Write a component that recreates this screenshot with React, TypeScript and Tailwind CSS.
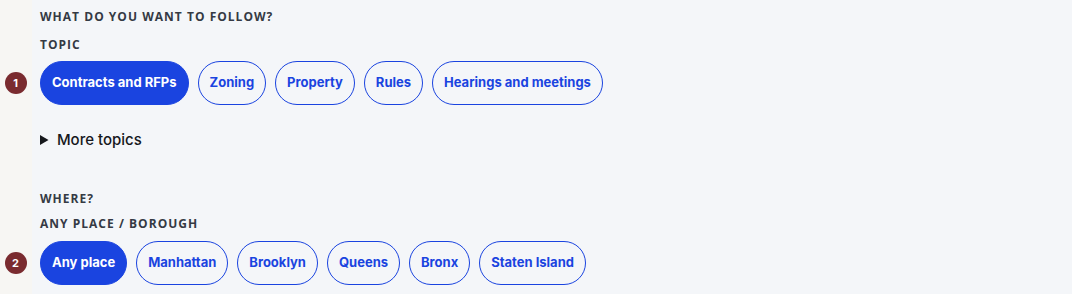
import { useState } from "react";

const topics = ["Contracts and RFPs", "Zoning", "Property", "Rules", "Hearings and meetings"];
const places = ["Any place", "Manhattan", "Brooklyn", "Queens", "Bronx", "Staten Island"];

function Label({ children, className = "" }: { children: React.ReactNode; className?: string }) {
  return (
    <div
      className={`pl-[40px] text-[12px] leading-[16px] font-bold tracking-[0.085em] text-[#353a44] ${className}`}
      style={{ fontFamily: '"Open Sans", sans-serif' }}
    >
      {children}
    </div>
  );
}

function ChipRow({
  step,
  items,
  selected,
  onSelect,
}: {
  step: number;
  items: string[];
  selected: string;
  onSelect: (v: string) => void;
}) {
  return (
    <div className="flex items-center">
      <div className="w-[32px] flex justify-center pr-[1px]">
        <span
          className="flex h-[22px] w-[22px] items-center justify-center rounded-full bg-[#7a2b2f] text-[11px] font-bold text-white"
          style={{ fontFamily: "Inter, sans-serif" }}
        >
          {step}
        </span>
      </div>
      <div className="ml-[8px] flex gap-[9px]">
        {items.map((item) => {
          const on = item === selected;
          return (
            <button
              key={item}
              onClick={() => onSelect(item)}
              className={`h-[44px] rounded-full border px-[11px] text-[13px] font-bold ${
                on
                  ? "border-[#1a44e0] bg-[#1a44e0] text-white"
                  : "border-[#1a44e0] bg-transparent text-[#1a44e0]"
              }`}
              style={{ fontFamily: "Inter, sans-serif" }}
            >
              {item}
            </button>
          );
        })}
      </div>
    </div>
  );
}

export default function App() {
  const [topic, setTopic] = useState("Contracts and RFPs");
  const [place, setPlace] = useState("Any place");

  return (
    <div className="h-[294px] w-full overflow-hidden bg-[linear-gradient(to_right,#f7f6f3_32px,#f4f6f9_32px)]">
      <Label className="pt-[9px]">WHAT DO YOU WANT TO FOLLOW?</Label>
      <Label className="mt-[12px]">TOPIC</Label>
      <div className="mt-[8px]">
        <ChipRow step={1} items={topics} selected={topic} onSelect={setTopic} />
      </div>
      <details className="mt-[25px] pl-[40px]">
        <summary
          className="cursor-pointer text-[15px] leading-[20px] font-medium text-[#16181d]"
          style={{ fontFamily: "Inter, sans-serif" }}
        >
          <span className="ml-[1px]">More topics</span>
        </summary>
      </details>
      <Label className="mt-[41px]">WHERE?</Label>
      <Label className="mt-[9px]">ANY PLACE / BOROUGH</Label>
      <div className="mt-[9px]">
        <ChipRow step={2} items={places} selected={place} onSelect={setPlace} />
      </div>
    </div>
  );
}
